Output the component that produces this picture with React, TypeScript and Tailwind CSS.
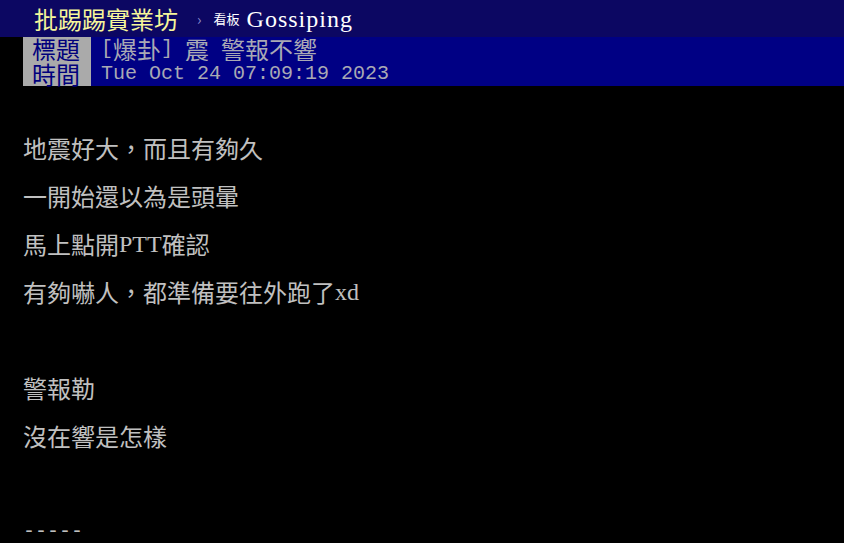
import React from "react";

const cjk = "font-['Noto_Sans_CJK_TC','Noto_Sans_CJK_JP',sans-serif]";

// half-width latin, ptt 標頭是等寬格子:半形 12px
function Half({ children }: { children: React.ReactNode }) {
  return <span className="font-['Liberation_Mono',monospace] text-[20px] leading-none whitespace-pre">{children}</span>;
}

// 內文的英數字是比例字
function Latin({ children }: { children: React.ReactNode }) {
  return <span className="font-['Liberation_Serif',serif] text-[24px] leading-none whitespace-pre">{children}</span>;
}

function Line({ children }: { children?: React.ReactNode }) {
  return <div className="h-[48px] flex items-center whitespace-pre">{children}</div>;
}

export default function App() {
  return (
    <div className={`h-screen overflow-hidden bg-black ${cjk}`}>
      {/* topbar */}
      <div className="flex items-center h-[37px] bg-[#0c0762] pl-[34px]">
        <span className="text-[24px] leading-none text-[#f6f69a]">批踢踢實業坊</span>
        <span className="ml-[19px] text-[15px] leading-none text-[#8a8acc]">›</span>
        <span className="ml-[12px] text-[13px] leading-none text-white">看板</span>
        <span className="ml-[7px] font-['Liberation_Serif',serif] text-[24px] tracking-[1px] leading-none text-white">
          Gossiping
        </span>
      </div>

      {/* article meta */}
      <div className="pl-[23px]">
        <div className="flex h-[24px]">
          <div className="w-[68px] bg-[#aaaaaa] pl-[9px] flex items-center text-[24px] leading-none text-[#00007c]">標題</div>
          <div className="flex-1 bg-[#000084] pl-[10px] flex items-center text-[24px] leading-none text-[#a9a9b4]">
            <Half>[</Half>爆卦<Half>] </Half>震<Half> </Half>警報不響
          </div>
        </div>
        <div className="flex h-[25px]">
          <div className="w-[68px] bg-[#aaaaaa] pl-[9px] flex items-center text-[24px] leading-none text-[#00007c]">時間</div>
          <div className="flex-1 bg-[#000084] pl-[10px] flex items-center text-[#a9a9b4]">
            <Half>Tue Oct 24 07:09:19 2023</Half>
          </div>
        </div>
      </div>

      {/* content */}
      <div className="pt-[38px] pl-[23px] text-[24px] leading-none text-[#c0c0c0]">
        <Line>地震好大，而且有夠久</Line>
        <Line>一開始還以為是頭暈</Line>
        <Line>
          馬上點開<Latin>PTT</Latin>確認
        </Line>
        <Line>
          有夠嚇人，都準備要往外跑了<Latin>xd</Latin>
        </Line>
        <Line />
        <Line>警報勒</Line>
        <Line>沒在響是怎樣</Line>
        <Line />
        <Line>
          <Half>-----</Half>
        </Line>
      </div>
    </div>
  );
}
